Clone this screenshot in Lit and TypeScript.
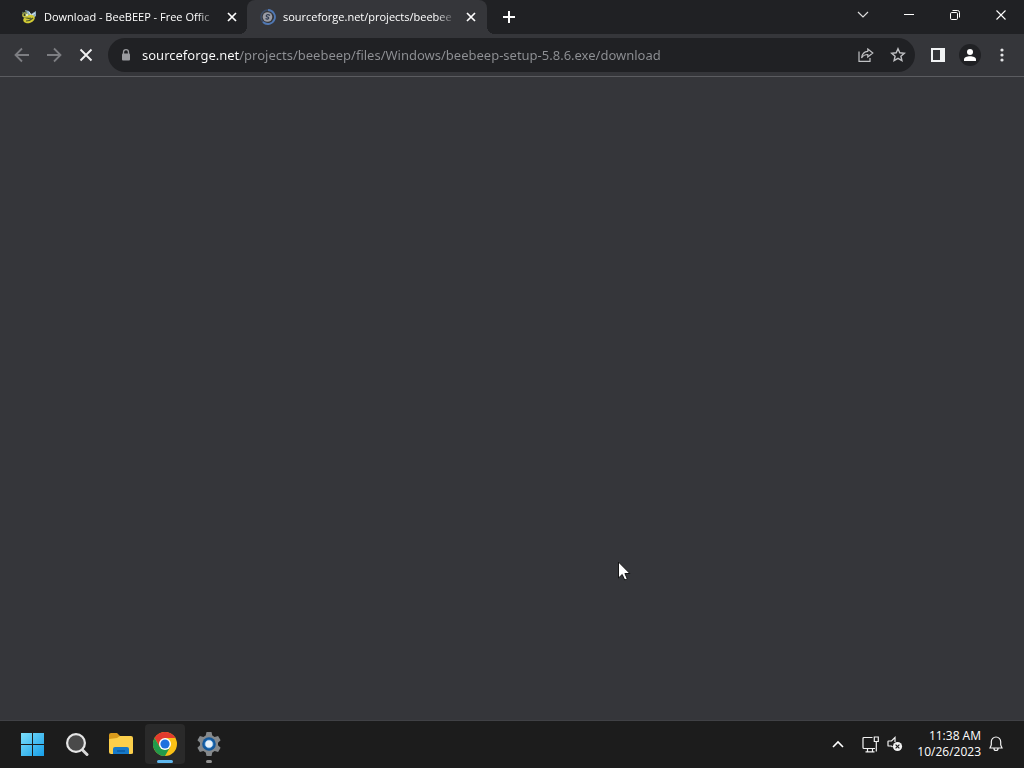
import { LitElement, html, css } from "lit";
import { customElement } from "lit/decorators.js";

const closeIcon = html`<svg width="10" height="10" viewBox="0 0 10 10" fill="none" stroke="currentColor" stroke-width="1.7"><path d="M1 1l8 8M9 1L1 9" /></svg>`;

const beeIcon = html`<svg width="16" height="16" viewBox="0 0 16 16">
  <path d="M6 6L4 1l4 1 2 3 5-3v5l-4 3z" fill="#8fb0c6" />
  <path d="M8 3l2 3M11 6l3-2" stroke="#e3edf2" />
  <ellipse cx="8" cy="10" rx="6" ry="4" transform="rotate(-20 8 10)" fill="#d2cb34" />
  <path d="M3 8c2 1 4 2 7 1M5 12c3 0 5-1 7-3" stroke="#4a5530" stroke-width="1.200" fill="none" />
  <circle cx="4" cy="6" r="2.800" fill="#c5c64a" />
  <path d="M1 3l3 2M5 2v3" stroke="#5c7356" />
  <circle cx="3.500" cy="6" r="1" fill="#28312c" /><circle cx="6" cy="6" r="1" fill="#eef3dc" />
</svg>`;

const loadingIcon = html`<svg width="16" height="16" viewBox="0 0 16 16" fill="none">
  <circle cx="8" cy="8" r="7" stroke="#3c4c68" stroke-width="1.500" />
  <path d="M8 1a7 7 0 1 1-5 12" stroke="#5078b3" stroke-width="1.800" />
  <circle cx="7.500" cy="8" r="4.800" fill="#9a9ca5" />
  <path d="M10 6.500C8 4.800 5.500 6 6.500 7.500l2 1c.8 1.200-1 2.200-3 1" stroke="#303c52" stroke-width="1.200" />
</svg>`;

@customElement("app-root")
export class AppRoot extends LitElement {
  static styles = css`
    :host {
      display: flex;
      flex-direction: column;
      height: 100vh;
      overflow: hidden;
      background: #35363a;
      color: #fff;
      font-family: "Segoe UI", "Open Sans", "Noto Sans", sans-serif;
      font-size: 12px;
      line-height: 16px;
    }
    * { box-sizing: border-box; }
    svg { display: block; flex: none; }
    button {
      display: flex;
      align-items: center;
      justify-content: center;
      flex: none;
      padding: 0;
      border: 0;
      background: none;
      color: inherit;
      font: inherit;
    }
    .strip { display: flex; height: 34px; background: #202124; padding-left: 8px; }
    .tab {
      position: relative;
      display: flex;
      align-items: center;
      width: 240px;
      height: 34px;
      padding: 0 8px 0 13px;
      border-radius: 8px 8px 0 0;
    }
    .tab.active { background: #35363a; margin-left: -1px; }
    .tab.active::before, .tab.active::after {
      content: "";
      position: absolute;
      bottom: 0;
      width: 8px;
      height: 8px;
    }
    .tab.active::before { right: 100%; background: radial-gradient(circle at 0 0, transparent 8px, #35363a 8px); }
    .tab.active::after { left: 100%; background: radial-gradient(circle at 100% 0, transparent 8px, #35363a 8px); }
    .title {
      flex: 1;
      min-width: 0;
      margin-left: 7px;
      overflow: hidden;
      white-space: nowrap;
      font-size: 11px;
      mask-image: linear-gradient(to left, transparent, #000 20px);
    }
    .tabclose { width: 16px; height: 16px; margin-left: 7px; }
    .newtab { width: 28px; height: 34px; margin-left: 8px; }
    .window { display: flex; margin-left: auto; }
    .window button { width: 46px; height: 29px; }
    .toolbar {
      display: flex;
      align-items: center;
      height: 43px;
      padding: 0 6px;
      border-bottom: 1px solid #5b5c60;
    }
    .tool { width: 32px; height: 32px; }
    .dim { color: #7d7e82; }
    .address {
      display: flex;
      align-items: center;
      flex: 1;
      height: 34px;
      margin: 0 7px 0 6px;
      padding: 0 1px 0 12px;
      border-radius: 17px;
      background: #202124;
      color: #c0c1c4;
    }
    .url {
      flex: 1;
      min-width: 0;
      height: 20px;
      margin-left: 10px;
      padding: 0;
      border: 0;
      outline: 0;
      font-family: "Segoe UI", "Noto Sans", "Open Sans", sans-serif;
      font-size: 13px;
      line-height: 20px;
      color: #8f9195;
      background: linear-gradient(to right, #fff 98px, #8f9195 98px);
      background-clip: text;
      -webkit-text-fill-color: transparent;
    }
    .avatar { display: flex; align-items: center; justify-content: center; width: 22px; height: 22px; border-radius: 50%; background: #202124; }
    main { flex: 1; position: relative; min-height: 0; }
    .pointer { position: absolute; left: 618px; top: 484px; }
    .taskbar {
      display: flex;
      align-items: center;
      height: 48px;
      padding: 0 13px 1px;
      border-top: 1px solid #404145;
      background: #1c1c1c;
    }
    .apps { display: flex; gap: 4px; }
    .app { position: relative; width: 40px; height: 40px; border-radius: 4px; }
    .app.current { background: #2a2a2a; }
    .app.current::after, .app.running::after {
      content: "";
      position: absolute;
      bottom: 1px;
      left: 50%;
      width: 6px;
      height: 3px;
      margin-left: -3px;
      border-radius: 2px;
      background: #929292;
    }
    .app.current::after { width: 16px; margin-left: -8px; background: #5fb8ee; }
    .tray { display: flex; align-items: center; margin-left: auto; }
    .tray button { height: 40px; }
    .more { width: 32px; }
    .network { width: 32px; }
    .sound { width: 18px; }
    .clock { width: 77px; flex-direction: column; align-items: flex-end; }
    .tray .bell { width: 30px; }
  `;

  render() {
    return html`
      <div class="strip">
        <div class="tab">
          ${beeIcon}<span class="title">Download - BeeBEEP - Free Offic</span>
          <button class="tabclose" aria-label="Close tab">${closeIcon}</button>
        </div>
        <div class="tab active">
          ${loadingIcon}<span class="title">sourceforge.net/projects/beebee</span>
          <button class="tabclose" aria-label="Close tab">${closeIcon}</button>
        </div>
        <button class="newtab" aria-label="New tab"><svg width="12" height="12" viewBox="0 0 12 12" stroke="#fff" stroke-width="2"><path d="M6 0v12M0 6h12" /></svg></button>
        <div class="window">
          <button aria-label="Search tabs"><svg width="12" height="8" viewBox="0 0 12 8" fill="none" stroke="#ddd" stroke-width="1.200"><path d="M1 1l5 5 5-5" /></svg></button>
          <button aria-label="Minimize"><svg width="10" height="2" viewBox="0 0 10 2"><path d="M0 0h10v1H0z" fill="#fff" /></svg></button>
          <button aria-label="Restore"><svg width="10" height="10" viewBox="0 0 10 10" fill="none" stroke="#fff"><rect x=".5" y="2.500" width="7" height="7" rx="1.200" /><path d="M2.500 .5h5a2 2 0 0 1 2 2v5" /></svg></button>
          <button aria-label="Close"><svg width="10" height="10" viewBox="0 0 10 10" stroke="#fff" stroke-width="1.100"><path d="M.5 .5l9 9M9.500 .5l-9 9" /></svg></button>
        </div>
      </div>
      <div class="toolbar">
        <button class="tool dim" aria-label="Back"><svg width="16" height="16" viewBox="0 0 16 16" fill="none" stroke="currentColor" stroke-width="1.800"><path d="M15 8H2M8 1.500L1.500 8 8 14.500" /></svg></button>
        <button class="tool dim" aria-label="Forward"><svg width="16" height="16" viewBox="0 0 16 16" fill="none" stroke="currentColor" stroke-width="1.800"><path d="M1 8h13M8 1.500L14.500 8 8 14.500" /></svg></button>
        <button class="tool" aria-label="Stop"><svg width="14" height="14" viewBox="0 0 14 14" stroke="#f1f1f2" stroke-width="1.900"><path d="M1.500 1.500l11 11M12.500 1.500l-11 11" /></svg></button>
        <div class="address">
          <svg width="12" height="12" viewBox="0 0 12 12"><path d="M3.500 5V3.200a2.500 2.500 0 0 1 5 0V5" fill="none" stroke="#9a9b9f" stroke-width="1.300" /><rect x="2" y="4.500" width="8" height="7" rx="1" fill="#9a9b9f" /></svg>
          <input class="url" type="text" aria-label="Address" spellcheck="false" .value=${"sourceforge.net/projects/beebeep/files/Windows/beebeep-setup-5.8.6.exe/download"} />
          <button class="tool" aria-label="Share"><svg width="16" height="14" viewBox="0 0 16 14" fill="none" stroke="currentColor" stroke-width="1.200"><path d="M1 3.500v9.900h11V10M9.800 1l5 4-5 4V6.500C7 6.500 5 7.500 3.600 10 4 6 6.200 3.500 9.800 3.300z" /></svg></button>
          <button class="tool" aria-label="Bookmark"><svg width="16" height="16" viewBox="0 0 16 16" fill="none" stroke="currentColor" stroke-width="1.400"><path d="M8 1.700l1.800 4.100 4.500.4-3.400 3 1 4.400L8 11.300l-3.900 2.300 1-4.400-3.400-3 4.500-.4z" /></svg></button>
        </div>
        <button class="tool" aria-label="Side panel"><svg width="14" height="14" viewBox="0 0 14 14"><path fill="#f1f3f4" fill-rule="evenodd" d="M0 0h14v14H0zM2 2v10h7V2z" /></svg></button>
        <button class="tool" aria-label="Profile"><span class="avatar"><svg width="12" height="12" viewBox="0 0 12 12" fill="#fff"><circle cx="6" cy="3" r="3" /><path d="M0 12v-1.500C0 8.200 3 7.200 6 7.200s6 1 6 3.300V12z" /></svg></span></button>
        <button class="tool" aria-label="Menu"><svg width="4" height="14" viewBox="0 0 4 14" fill="#e4e5e7"><circle cx="2" cy="2" r="1.600" /><circle cx="2" cy="7" r="1.600" /><circle cx="2" cy="12" r="1.600" /></svg></button>
      </div>
      <main>
        <svg class="pointer" width="13" height="20" viewBox="0 0 13 20"><path d="M.5 1v16l3.700-3.500 2.500 5.500 2.600-1.100-2.400-5.400h5z" fill="#fff" stroke="#161616" /></svg>
      </main>
      <footer class="taskbar">
        <div class="apps">
          <button class="app" aria-label="Start"><svg width="24" height="24" viewBox="0 0 24 24">
            <defs><linearGradient id="win" x1="0" y1="0" x2="24" y2="24" gradientUnits="userSpaceOnUse"><stop offset="0" stop-color="#7ee0fb" /><stop offset="1" stop-color="#149de8" /></linearGradient></defs>
            <path fill="url(#win)" d="M0 1h11v11H0zM12 1h11v11H12zM0 13h11v11H0zM12 13h11v11H12z" /></svg></button>
          <button class="app" aria-label="Search"><svg width="24" height="24" viewBox="0 0 24 24"><path d="M17.500 18l4.500 4.500" stroke="#d9d9d9" stroke-width="3" stroke-linecap="round" /><circle cx="11" cy="11" r="8.900" fill="#4a4a4a" stroke="#e6e6e6" stroke-width="2.200" /></svg></button>
          <button class="app" aria-label="File Explorer"><svg width="24" height="22" viewBox="0 0 24 22">
            <path d="M0 2q0-2 2-2h6l3 3v5H0z" fill="#d99b1c" /><path d="M0 6l8-1 3-2h11q2 0 2 2v15q0 1-2 1H2q-2 0-2-2z" fill="#fbcf4b" /><path d="M4 21v-5q0-2 2-2h12q2 0 2 2v5z" fill="#1679c9" /><path d="M8 18h8" stroke="#0b5ba5" stroke-width="1.500" /></svg></button>
          <button class="app current" aria-label="Google Chrome"><svg width="24" height="24" viewBox="0 0 24 24">
            <circle cx="12" cy="12" r="12" fill="#fbc116" />
            <path d="M12 12V6h10.400A12 12 0 0 0 1.600 6l5.200 9z" fill="#e33b2e" />
            <path d="M1.600 6a12 12 0 0 0 10.400 18l5.200-9L12 12l-5.200 3z" fill="#229a4b" />
            <circle cx="12" cy="12" r="6" fill="#fff" /><circle cx="12" cy="12" r="4.600" fill="#1d71df" /></svg></button>
          <button class="app running" aria-label="Settings"><svg width="24" height="24" viewBox="0 0 24 24">
            <path d="M9.500 0h5l.8 3.600 2.300 1.300L21.100 4l2.500 4.200L21 10.700v2.600l2.600 2.500-2.500 4.200-3.500-.9-2.300 1.300-.8 3.600h-5l-.8-3.600-2.300-1.300-3.500.9-2.500-4.200L3 13.300v-2.600L.4 8.200 2.900 4l3.500.9 2.300-1.300z" fill="#85898c" />
            <circle cx="12" cy="12" r="6.800" fill="#15599b" /><circle cx="12" cy="12" r="4.300" fill="#e8f2fa" stroke="#1b6fbd" /></svg></button>
        </div>
        <div class="tray">
          <button class="more" aria-label="Show hidden icons"><svg width="12" height="8" viewBox="0 0 12 8" fill="none" stroke="#fff" stroke-width="1.600"><path d="M1 7l5-5 5 5" /></svg></button>
          <button class="network" aria-label="Network"><svg width="17" height="17" viewBox="0 0 17 17" fill="none" stroke="#f2f2f2" stroke-width="1.200"><path d="M10.500 1.500H2q-1 0-1 1v9q0 1 1 1h11M5.500 12.500v3M10.500 12.500v3M3.500 15.800h9M12.300 1h4v4.500h-4zM14.300 5.500v10" /></svg></button>
          <button class="sound" aria-label="Volume"><svg width="16" height="16" viewBox="0 0 16 16" fill="none" stroke="#f2f2f2" stroke-width="1.200"><path d="M8 6V1.500L4.500 5H1.600q-.6 0-.6.6v3.800q0 .6.600.6h2.900l1 1" /><circle cx="10.500" cy="10.500" r="4.600" fill="#f2f2f2" stroke="none" /><path d="M8.600 8.600l3.800 3.800M12.400 8.600l-3.800 3.800" stroke="#1c1c1c" /></svg></button>
          <button class="clock"><time>11:38 AM</time><time>10/26/2023</time></button>
          <button class="bell" aria-label="Notifications"><svg width="14" height="16" viewBox="0 0 14 16" fill="none" stroke="#f2f2f2" stroke-width="1.200"><path d="M7 1a4.700 4.700 0 0 0-4.700 4.700v3.200L1 12h12l-1.300-3.100V5.700A4.700 4.700 0 0 0 7 1zM5 12.500a2 2 0 0 0 4 0" /></svg></button>
        </div>
      </footer>
    `;
  }
}
